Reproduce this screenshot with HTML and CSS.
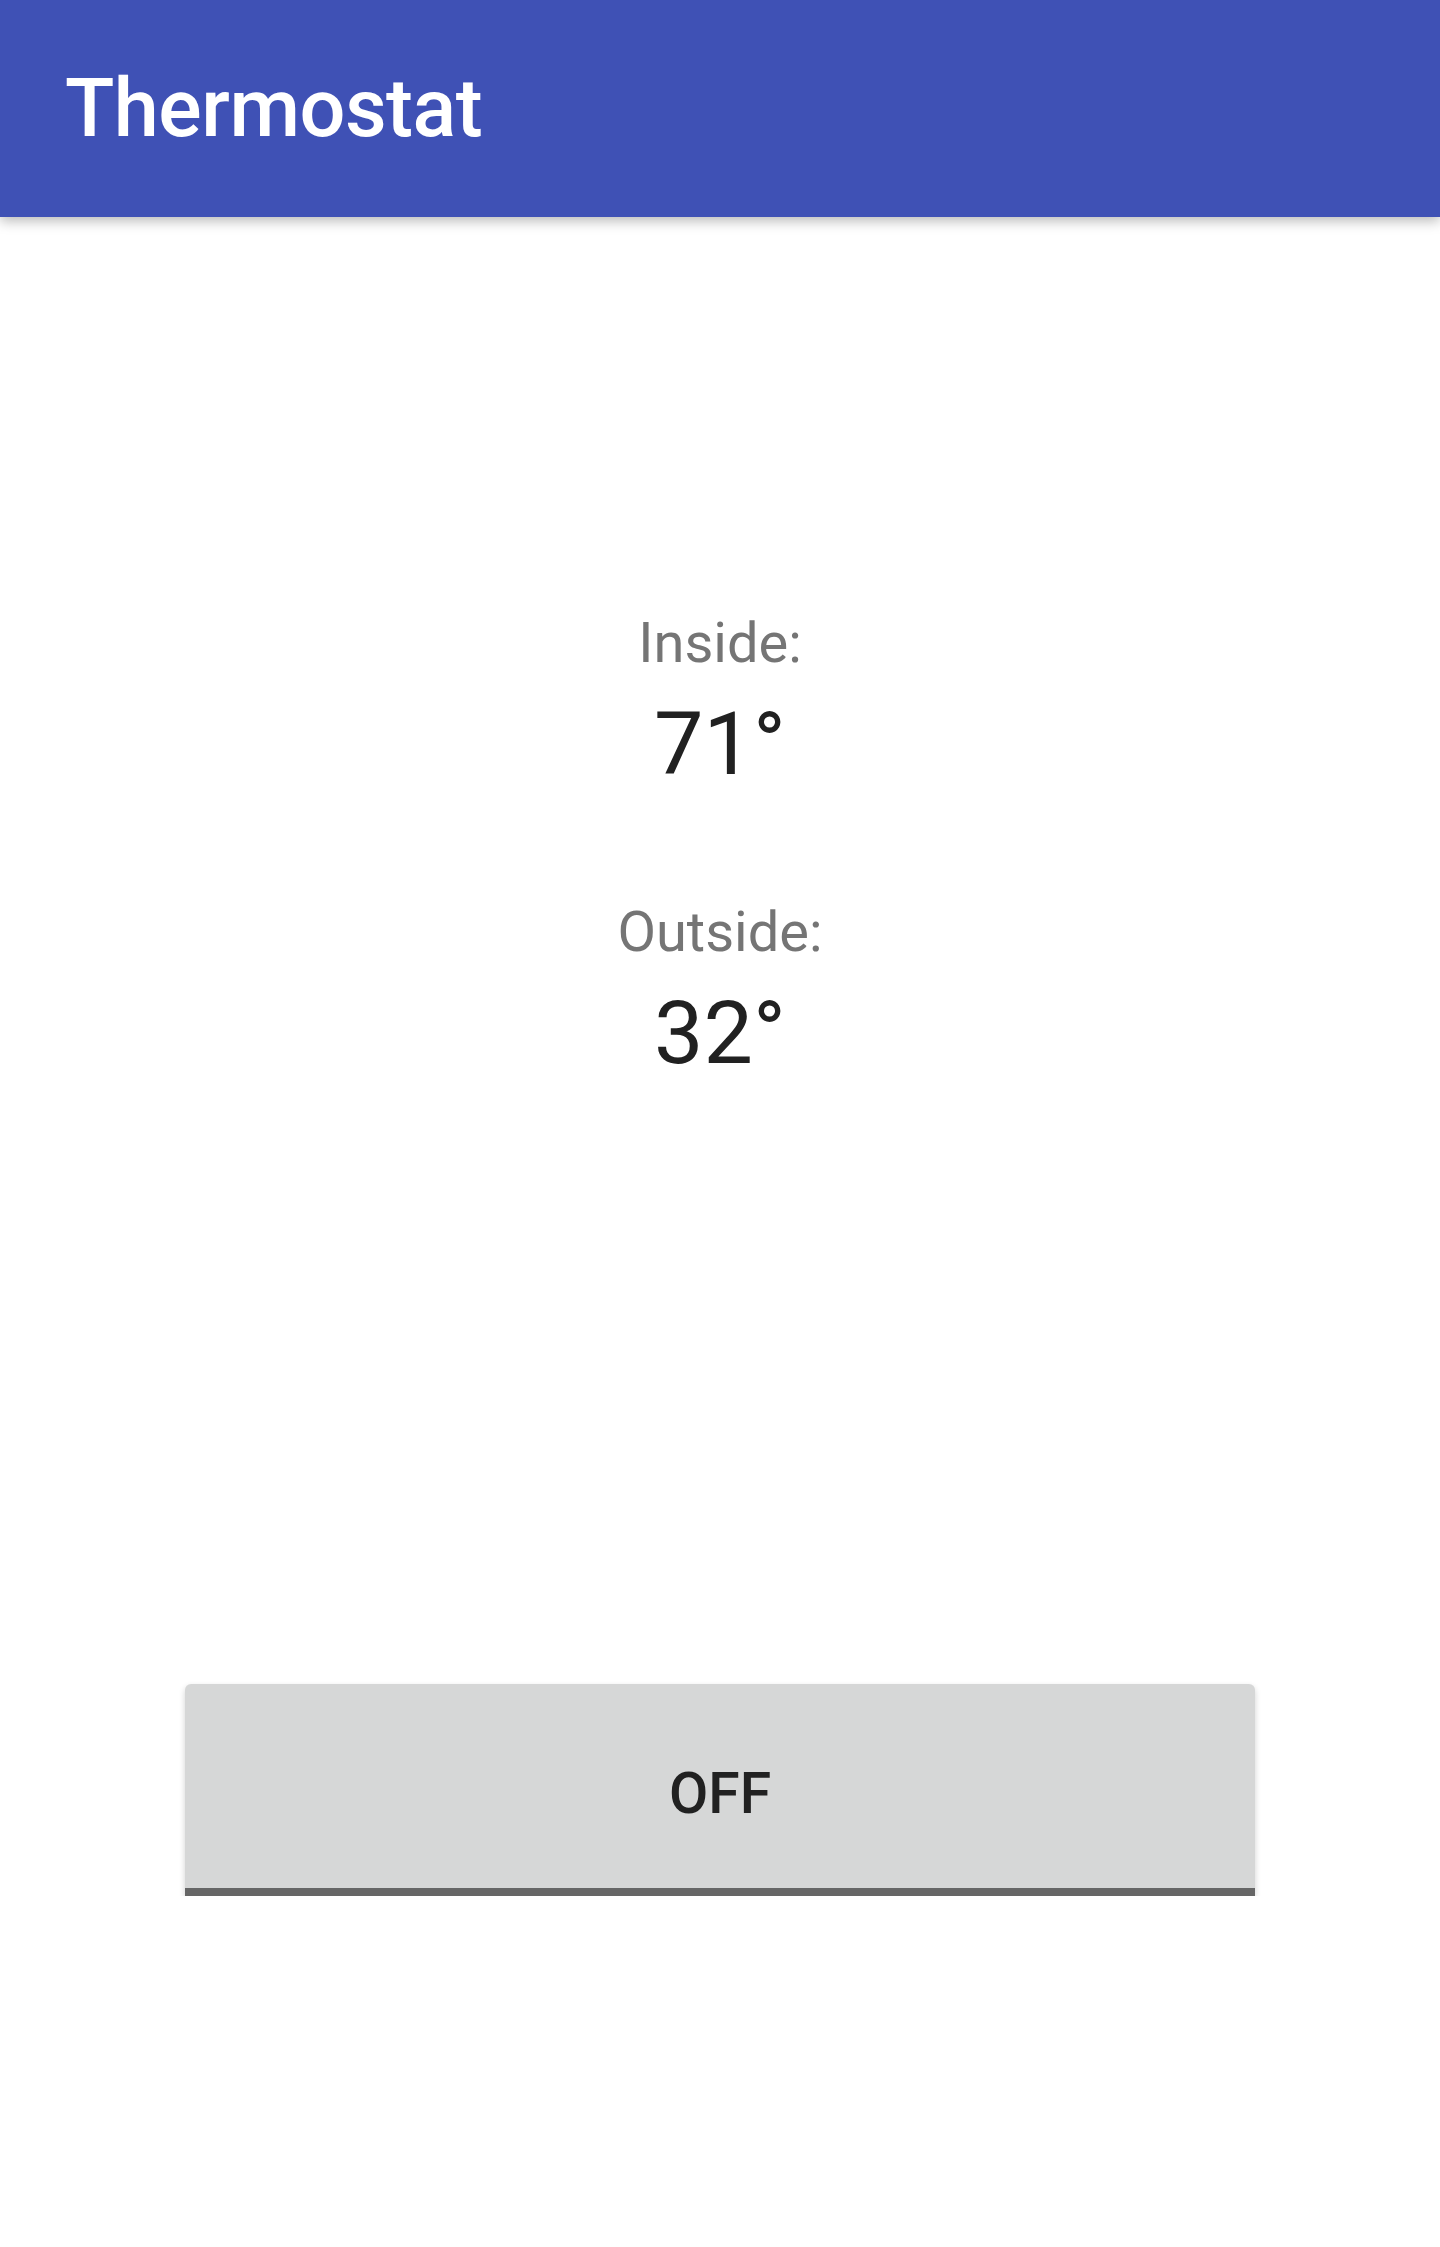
FILE: index.html
```html
<!DOCTYPE html>
<html>
<head>
<meta charset="utf-8">
<link rel="stylesheet" href="styles.css">
</head>
<body>
<header class="appbar"><h1 class="title">Thermostat</h1></header>
<main class="content">
  <div class="reading">
    <div class="label">Inside:</div>
    <div class="value">71°</div>
  </div>
  <div class="reading reading-second">
    <div class="label">Outside:</div>
    <div class="value">32°</div>
  </div>
  <button class="toggle">OFF</button>
</main>
</body>
</html>
```
FILE: styles.css
```css
html, body {
  margin: 0;
  padding: 0;
  background: #ffffff;
  font-family: Roboto, "Noto Sans", sans-serif;
}
.appbar {
  height: 217px;
  background: #3f51b5;
  display: flex;
  align-items: center;
  padding-left: 65px;
  box-shadow: 0 4px 12px rgba(0,0,0,0.28);
  position: relative;
  z-index: 1;
}
.title {
  margin: 0;
  color: #ffffff;
  font-size: 81px;
  font-weight: 500;
  letter-spacing: -0.5px;
  line-height: 1;
}
.content {
  display: flex;
  flex-direction: column;
  align-items: center;
  padding-top: 398px;
}
.reading {
  display: flex;
  flex-direction: column;
  align-items: center;
}
.reading-second {
  margin-top: 116px;
}
.label {
  font-size: 56px;
  line-height: 1;
  color: #757575;
}
.value {
  margin-top: 29px;
  font-size: 88px;
  line-height: 1;
  color: #212121;
}
.toggle {
  margin-top: 607px;
  width: 1070px;
  box-sizing: border-box;
  height: 212px;
  padding: 81px 0 67px;
  border: none;
  border-bottom: 8px solid #666666;
  border-radius: 6px 6px 0 0;
  background: #d6d7d7;
  color: #212121;
  font-family: Roboto, "Noto Sans", sans-serif;
  font-size: 57px;
  font-weight: 500;
  line-height: 1;
  box-shadow: 0 3px 6px rgba(0,0,0,0.18);
}
```
